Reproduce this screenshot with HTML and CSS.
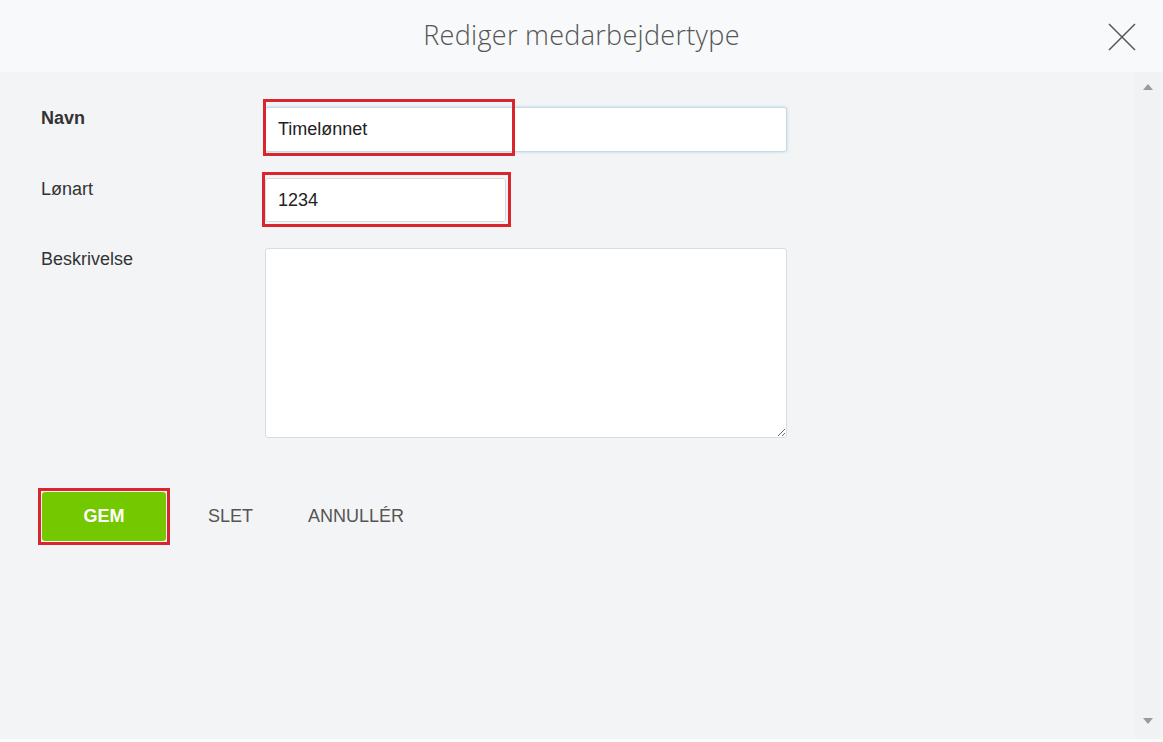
FILE: index.html
```html
<!DOCTYPE html>
<html>
<head>
    <meta charset="UTF-8">
    <title>Rediger medarbejdertype</title>
    <link rel="stylesheet" href="styles.css">
</head>
<body>
    <div id="dialog">
        <div class="dialog-header">
            <h1 class="dialog-title">Rediger medarbejdertype</h1>
            <button class="close-btn" aria-label="Luk">
                <svg width="28" height="28" viewBox="0 0 28 28">
                    <path d="M1 1 L27 27 M27 1 L1 27" stroke="#555" stroke-width="1.5" fill="none"/>
                </svg>
            </button>
        </div>

        <div class="dialog-main">
            <div class="dialog-content">
                <div class="form-row">
                    <label class="form-label bold">Navn</label>
                    <div class="field-wrap">
                        <input class="text-input wide focused" type="text" value="Timelønnet">
                        <div class="mark mark-navn"></div>
                    </div>
                </div>
                <div class="form-row">
                    <label class="form-label">Lønart</label>
                    <div class="field-wrap">
                        <input class="text-input short" type="text" value="1234">
                        <div class="mark mark-lonart"></div>
                    </div>
                </div>
                <div class="form-row">
                    <label class="form-label">Beskrivelse</label>
                    <div class="field-wrap">
                        <textarea class="text-area"></textarea>
                    </div>
                </div>

                <div class="actions">
                    <div class="field-wrap">
                        <button class="btn btn-save">GEM</button>
                        <div class="mark mark-gem"></div>
                    </div>
                    <button class="btn btn-link">SLET</button>
                    <button class="btn btn-link">ANNULLÉR</button>
                </div>
            </div>

            <div class="scrollbar">
                <span class="arrow up"></span>
                <span class="arrow down"></span>
            </div>
        </div>
    </div>
</body>
</html>
```

FILE: styles.css
```css
html, body {
  margin: 0;
  height: 100%;
}

body {
  background-color: #f3f4f6;
  font-family: "Liberation Sans", Arial, sans-serif;
  color: #333;
}

#dialog {
  display: flex;
  flex-direction: column;
  height: 742px;
}

.dialog-header {
  height: 72px;
  flex-shrink: 0;
  display: flex;
  align-items: center;
  justify-content: center;
  position: relative;
  background-color: #f8f9fa;
}

.dialog-title {
  margin: 0 0 4px 0;
  font-family: "Open Sans", sans-serif;
  font-weight: 300;
  font-size: 27px;
  color: #555;
  letter-spacing: 0.3px;
}

.close-btn {
  position: absolute;
  right: 27px;
  top: 23px;
  background: none;
  border: none;
  padding: 0;
  width: 28px;
  height: 28px;
  cursor: pointer;
}

.dialog-main {
  flex: 1;
  display: flex;
  border-bottom: 3px solid #fbfbfc;
}

.dialog-content {
  flex: 1;
  padding: 35px 0 0 41px;
}

.form-row {
  display: flex;
  align-items: flex-start;
  margin-bottom: 26px;
}

.form-label {
  width: 224px;
  font-size: 18px;
  line-height: 22px;
  color: #333;
}

.form-label.bold {
  font-weight: bold;
}

.field-wrap {
  position: relative;
}

.text-input {
  display: block;
  box-sizing: border-box;
  height: 45px;
  padding: 0 12px;
  font-family: "Liberation Sans", Arial, sans-serif;
  font-size: 18px;
  color: #222;
  background-color: #fff;
  border: 1px solid #dcdcdc;
  border-radius: 3px;
  outline: none;
}

.text-input.wide {
  width: 522px;
}

.text-input.short {
  width: 241px;
  height: 44px;
}

.text-input.focused {
  border-color: #c6dbe6;
  box-shadow: 0 0 3px rgba(150, 190, 215, 0.6);
}

.text-area {
  display: block;
  box-sizing: border-box;
  width: 522px;
  height: 190px;
  background-color: #fff;
  border: 1px solid #dcdcdc;
  border-radius: 3px;
  font-family: "Liberation Sans", Arial, sans-serif;
  font-size: 18px;
  outline: none;
}

/* red highlight frames drawn over the fields */
.mark {
  position: absolute;
  border: 3px solid #d9262e;
  pointer-events: none;
}

.mark-navn {
  left: -2px;
  top: -8px;
  width: 246px;
  height: 51px;
}

.mark-lonart {
  left: -3px;
  top: -6px;
  width: 243px;
  height: 49px;
}

.mark-gem {
  left: -4px;
  top: -4px;
  width: 126px;
  height: 51px;
}

.actions {
  display: flex;
  align-items: center;
  margin-top: 54px;
  margin-left: 1px;
}

.btn {
  font-family: "Liberation Sans", Arial, sans-serif;
  font-size: 18px;
  border: none;
  background: none;
  cursor: pointer;
}

.btn-save {
  display: block;
  width: 124px;
  height: 49px;
  background-color: #74c800;
  color: #fff;
  font-weight: bold;
  border-radius: 3px;
}

.btn-link {
  color: #555;
  padding: 0;
}

.field-wrap + .btn-link {
  margin-left: 42px;
}

.btn-link + .btn-link {
  margin-left: 55px;
}

.scrollbar {
  width: 25px;
  margin-right: 3px;
  background-color: #f1f2f4;
  position: relative;
}

.arrow {
  position: absolute;
  left: 8px;
  width: 0;
  height: 0;
  border-left: 5px solid transparent;
  border-right: 5px solid transparent;
}

.arrow.up {
  top: 12px;
  border-bottom: 6px solid #9a9a9a;
}

.arrow.down {
  bottom: 15px;
  border-top: 6px solid #9a9a9a;
}
```
